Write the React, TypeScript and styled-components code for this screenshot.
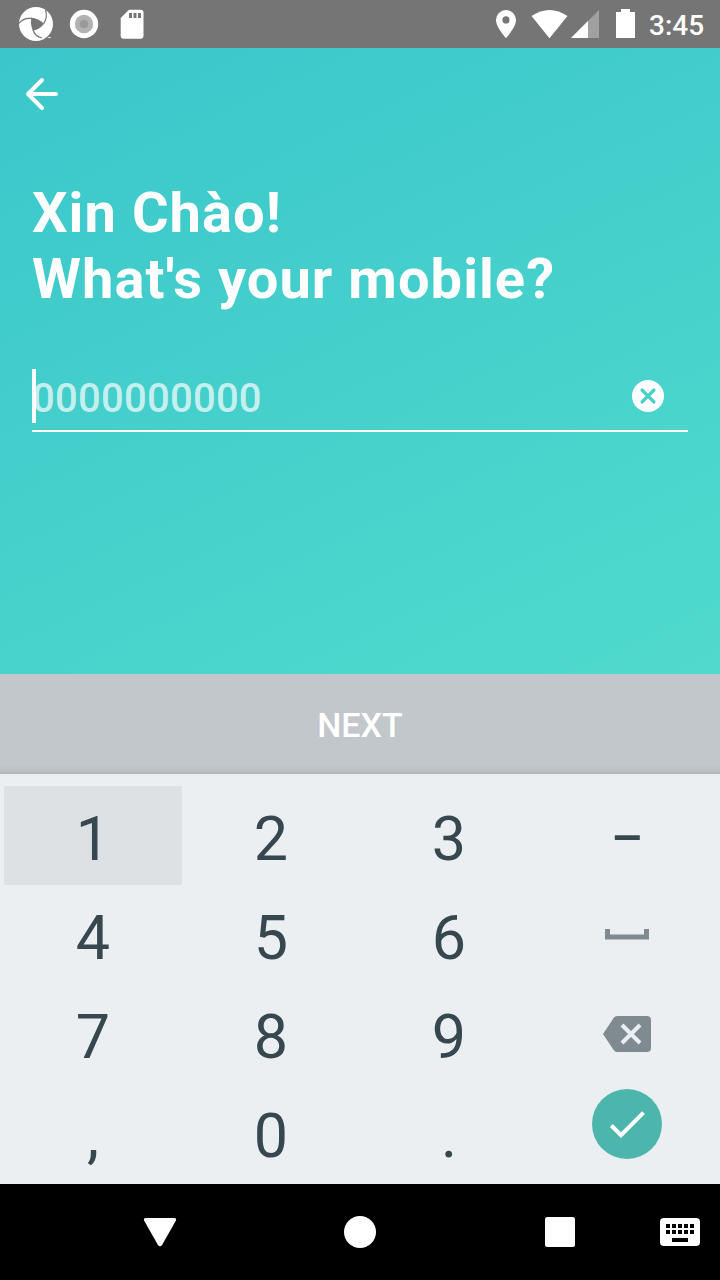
import React from "react";
import styled, { createGlobalStyle } from "styled-components";

const GlobalStyle = createGlobalStyle`
  * { box-sizing: border-box; }
  body { margin: 0; background: #000; font-family: Roboto, "Liberation Sans", sans-serif; }
`;

const Screen = styled.div`
  width: 720px;
  height: 1280px;
  display: flex;
  flex-direction: column;
  overflow: hidden;
`;

const StatusBar = styled.header`
  height: 48px;
  flex: none;
  background: #757575;
  display: flex;
  justify-content: space-between;
`;

const StatusIcons = styled.svg`
  display: block;
  flex: none;
`;

const StatusRight = styled.div`
  display: flex;
`;

const Clock = styled.time`
  width: 80px;
  padding-left: 9px;
  font-size: 28px;
  font-weight: 500;
  line-height: 51px;
  color: #fff;
`;

const Hero = styled.main`
  height: 626px;
  flex: none;
  padding: 26px 32px 0;
  background: linear-gradient(155deg, #3bc6cb 0%, #50dacd 100%);
  color: #fff;
`;

const BackButton = styled.button`
  display: block;
  width: 40px;
  height: 40px;
  margin-left: -10px;
  padding: 0;
  border: 0;
  background: none;
`;

const Title = styled.h1`
  margin: 66px 0 0;
  font-size: 56px;
  font-weight: 700;
  line-height: 66px;
  letter-spacing: 1.05px;
  white-space: nowrap;
`;

const PhoneField = styled.div`
  height: 63px;
  margin-top: 57px;
  border-bottom: 2px solid #fff;
  display: flex;
  align-items: flex-start;
`;

const Caret = styled.span`
  width: 4px;
  height: 54px;
  margin-right: -4px;
  background: #fff;
`;

const Placeholder = styled.span`
  flex: 1;
  font-size: 40px;
  font-weight: 500;
  line-height: 59px;
  letter-spacing: 0.25px;
  color: rgba(255, 255, 255, 0.7);
`;

const ClearButton = styled.button`
  width: 32px;
  height: 32px;
  margin: 11px 24px 0 0;
  padding: 0;
  border: 0;
  background: none;
`;

const NextButton = styled.button`
  height: 100px;
  flex: none;
  padding: 1px 0 0;
  border: 0;
  background: linear-gradient(#c2c7cb 0 91px, #bcc0c3 97px, #b0b4b7 100px);
  color: #fff;
  font: 500 34px Roboto, "Liberation Sans", sans-serif;
`;

const Keypad = styled.section`
  height: 410px;
  flex: none;
  padding: 12px 4px 0;
  background: #ebeff2;
  display: grid;
  grid-template-columns: repeat(4, 178px);
  grid-template-rows: repeat(4, 99px);
`;

const Key = styled.button<{ $pressed?: boolean }>`
  border: 0;
  padding: 7px 0 0;
  background: ${(p) => (p.$pressed ? "#dde1e4" : "none")};
  color: #37474f;
  font: 400 61px/1 Roboto, "Liberation Sans", sans-serif;
  display: flex;
  align-items: center;
  justify-content: center;
`;

const DashKey = styled(Key)`
  padding: 4px 0 0;
  font-size: 50px;
  font-weight: 500;
`;

const IconKey = styled(Key)`
  padding: 0;
`;

const SpaceKey = styled(IconKey)`
  padding-bottom: 2px;
`;

const EnterKey = styled(IconKey)`
  align-items: flex-start;
  padding-top: 6px;
`;

const NavBar = styled.nav`
  height: 96px;
  flex: none;
  background: #000;
`;

const digits = (keys: string[]) => keys.map((k) => <Key key={k} $pressed={k === "1"}>{k}</Key>);

export default function App() {
  return (
    <Screen>
      <GlobalStyle />
      <StatusBar>
        <StatusIcons width="160" height="48" viewBox="0 0 160 48">
          <circle cx="36" cy="24" r="17" fill="#fff" />
          <path d="M31.500 17.800Q38 18.200 44 23.800Q40 29.500 33 30.800Q29.800 24 31.500 17.800Z" fill="#757575" />
          <g fill="none" stroke="#757575" strokeWidth="1.200">
            <path d="M19 23.500Q23 17.500 32 18.400" />
            <path d="M45.500 10Q48 17 43.500 24" />
            <path d="M42 38Q35 36.500 32.800 29.500" />
          </g>
          <path d="M48 37.500h3" stroke="#ddd" strokeWidth="1" />
          <circle cx="84" cy="24" r="14.200" fill="#fff" />
          <circle cx="84" cy="24" r="9.200" fill="#b2b2b2" />
          <circle cx="84" cy="24" r="4.300" fill="#999" />
          <path fillRule="evenodd" fill="#fff" d="M129 9.700h11.500a3 3 0 0 1 3 3v23a3 3 0 0 1-3 3H123.700a3 3 0 0 1-3-3V18zM129 13v5h3v-5zM133.500 13v5h3v-5zM138 13v5h3v-5z" />
        </StatusIcons>
        <StatusRight>
          <StatusIcons width="160" height="48" viewBox="480 0 160 48">
            <path fillRule="evenodd" fill="#fff" d="M506 10a10 10 0 0 0-10 10c0 7.500 10 18 10 18s10-10.500 10-18a10 10 0 0 0-10-10zm0 6.300a3.600 3.600 0 1 1 0 7.200 3.600 3.600 0 0 1 0-7.200z" />
            <path d="M531.500 16Q549.500 4 567.500 16L549.500 38.300Z" fill="#fff" />
            <path d="M599 10v28h-28z" fill="#a0a0a0" />
            <path d="M588 21v17h-17z" fill="#fff" />
            <path d="M616 12h5V9h9v3h5v26h-19z" fill="#fff" />
          </StatusIcons>
          <Clock>3:45</Clock>
        </StatusRight>
      </StatusBar>

      <Hero>
        <BackButton aria-label="Back">
          <svg width="40" height="40" viewBox="22 74 40 40" fill="none" stroke="#fff" strokeWidth="4" strokeLinecap="round" strokeLinejoin="round">
            <path d="M42 80L28 94L42 108M28 94H56" />
          </svg>
        </BackButton>
        <Title>Xin Chào!<br />What's your mobile?</Title>
        <PhoneField>
          <Caret />
          <Placeholder>0000000000</Placeholder>
          <ClearButton aria-label="Clear">
            <svg width="32" height="32" viewBox="0 0 32 32">
              <circle cx="16" cy="16" r="16" fill="#fff" />
              <path d="M10 10l12 12M22 10L10 22" stroke="#49d1cb" strokeWidth="3.200" strokeLinecap="round" />
            </svg>
          </ClearButton>
        </PhoneField>
      </Hero>

      <NextButton>NEXT</NextButton>

      <Keypad>
        {digits(["1", "2", "3"])}
        <DashKey>–</DashKey>
        {digits(["4", "5", "6"])}
        <SpaceKey aria-label="Space">
          <svg width="46" height="12" viewBox="0 0 46 12">
            <path d="M3.500 1v8h39V1" fill="none" stroke="#808b91" strokeWidth="5" />
          </svg>
        </SpaceKey>
        {digits(["7", "8", "9"])}
        <IconKey aria-label="Backspace">
          <svg width="48" height="36" viewBox="0 0 48 36">
            <path d="M14 0h30a4 4 0 0 1 4 4v28a4 4 0 0 1-4 4H14q-2 0-3.200-1.800L0 18 10.800 1.800Q12 0 14 0z" fill="#808b91" />
            <path d="M19 9l18 18M37 9l-18 18" stroke="#ebeff2" strokeWidth="4" />
          </svg>
        </IconKey>
        {digits([",", "0", "."])}
        <EnterKey aria-label="Done">
          <svg width="70" height="70" viewBox="592 1089 70 70">
            <circle cx="627" cy="1124" r="35" fill="#4db6ac" />
            <path d="M611.300 1125.500l9.700 9.700L643.500 1112.700" fill="none" stroke="#fff" strokeWidth="4" />
          </svg>
        </EnterKey>
      </Keypad>

      <NavBar>
        <svg width="720" height="96" viewBox="0 1184 720 96" fill="#fff">
          <path d="M146 1218h28q3 0 1.800 2.800l-13.600 24q-2.200 3-4.400 0l-13.600-24q-1.200-2.800 1.800-2.800z" />
          <circle cx="360" cy="1232" r="16" />
          <rect x="545" y="1217" width="30" height="30" rx="2.500" />
          <rect x="660" y="1218" width="40" height="28" rx="4" />
          <g fill="#000">
            {[666, 672, 678, 684, 690].map((x) => (
              <React.Fragment key={x}>
                <rect x={x} y="1224" width="4" height="4" />
                <rect x={x} y="1230" width="4" height="4" />
              </React.Fragment>
            ))}
            <rect x="672" y="1238" width="16" height="4" />
          </g>
        </svg>
      </NavBar>
    </Screen>
  );
}
